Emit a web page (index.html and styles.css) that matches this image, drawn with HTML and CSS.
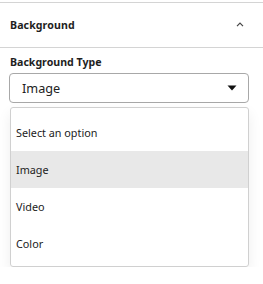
FILE: index.html
```html
<!DOCTYPE html>
<html lang="en">
<head>
  <meta charset="UTF-8" />
  <link rel="stylesheet" href="styles.css">
</head>
<body>

<div class="panel">

  <!-- Section header -->
  <div class="panel-header">
    <span class="panel-title">Background</span>
    <svg class="chevron" width="8" height="5" viewBox="0 0 8 5">
      <path d="M1 4.2 L4 1.2 L7 4.2" fill="none" stroke="#444" stroke-width="1.2" />
    </svg>
  </div>

  <!-- Field -->
  <div class="panel-body">
    <div class="field-label">Background Type</div>

    <div class="select-box">
      <span class="select-value">Image</span>
      <svg class="caret" width="10" height="6" viewBox="0 0 10 6">
        <path d="M0.5 0.5 L9.5 0.5 L5 5.5 Z" fill="#111" />
      </svg>
    </div>

    <ul class="option-list">
      <li class="option">Select an option</li>
      <li class="option is-active">Image</li>
      <li class="option">Video</li>
      <li class="option">Color</li>
    </ul>
  </div>

</div>

</body>
</html>
```

FILE: styles.css
```css
/* Page setup */
html, body {
  margin: 0;
  padding: 0;
  background: #fff;
  font-family: 'Noto Sans', 'Inter', sans-serif;
  color: #1e1e1e;
}

.panel {
  padding-top: 2px;
}

/* Collapsible header */
.panel-header {
  display: flex;
  align-items: center;
  justify-content: space-between;
  height: 44px;
  padding: 0 19px 0 10px;
  border-top: 1px solid #d4d4d4;
  border-bottom: 1px solid #d4d4d4;
}

.panel-title {
  font-size: 10.6px;
  line-height: 16px;
  font-weight: 700;
  letter-spacing: 0.1px;
}

.chevron {
  display: block;
  margin-bottom: 2px;
}

/* Body */
.panel-body {
  padding: 6px 14px 0 9px;
}

.field-label {
  font-size: 10.6px;
  line-height: 16px;
  font-weight: 700;
  padding-left: 1px;
  margin-bottom: 3px;
}

.select-box {
  display: flex;
  align-items: center;
  justify-content: space-between;
  height: 28px;
  padding: 0 11px 0 12px;
  border: 1px solid #a8a8a8;
  border-radius: 4px;
}

.select-value {
  font-size: 12.7px;
  line-height: 16px;
  color: #222;
}

.caret {
  display: block;
}

/* Open dropdown list */
.option-list {
  list-style: none;
  margin: 4px 0 0 1px;
  padding: 6px 0 4px;
  border: 1px solid #d0d0d0;
  border-radius: 3px;
  box-shadow: 0 6px 14px rgba(0, 0, 0, 0.07);
}

.option {
  height: 37px;
  line-height: 37px;
  padding-left: 5px;
  font-size: 10.8px;
  color: #222;
}

.option.is-active {
  background: #e8e8e8;
}
```
